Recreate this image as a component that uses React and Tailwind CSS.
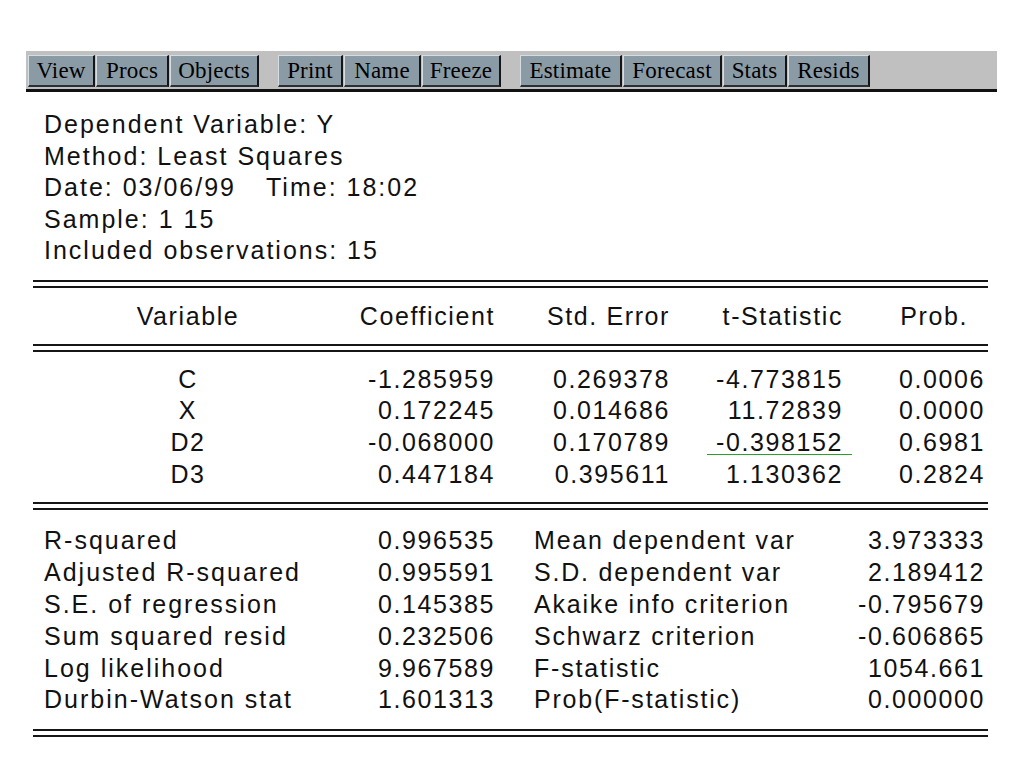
import React from "react";

const groups = [
  [
    ["View", "w-[67px]"],
    ["Procs", "w-[73px]"],
    ["Objects", "w-[89px]"],
  ],
  [
    ["Print", "w-[65px]"],
    ["Name", "w-[77px]"],
    ["Freeze", "w-[79px]"],
  ],
  [
    ["Estimate", "w-[102px]"],
    ["Forecast", "w-[99px]"],
    ["Stats", "w-[64px]"],
    ["Resids", "w-[82px]"],
  ],
];

const coefs = [
  ["C", "-1.285959", "0.269378", "-4.773815", "0.0006"],
  ["X", "0.172245", "0.014686", "11.72839", "0.0000"],
  ["D2", "-0.068000", "0.170789", "-0.398152", "0.6981"],
  ["D3", "0.447184", "0.395611", "1.130362", "0.2824"],
];

const stats = [
  ["R-squared", "0.996535", "Mean dependent var", "3.973333"],
  ["Adjusted R-squared", "0.995591", "S.D. dependent var", "2.189412"],
  ["S.E. of regression", "0.145385", "Akaike info criterion", "-0.795679"],
  ["Sum squared resid", "0.232506", "Schwarz criterion", "-0.606865"],
  ["Log likelihood", "9.967589", "F-statistic", "1054.661"],
  ["Durbin-Watson stat", "1.601313", "Prob(F-statistic)", "0.000000"],
];

const DoubleRule = () => (
  <div className="h-[8px] border-t-2 border-b-2 border-[#161616]" />
);

const ToolButton = ({ label, width }) => (
  <div
    className={`${width} h-[32px] flex items-center justify-center bg-[#8b9ba5] border-l border-t border-[#d5dde2] border-r-2 border-b-2 border-r-[#151515] border-b-[#2a2f33] text-[23px] tracking-[0.2px] text-black`}
    style={{ fontFamily: '"Liberation Serif", serif' }}
  >
    {label}
  </div>
);

export default function App() {
  return (
    <div
      className="w-[1024px] min-h-[768px] bg-white pt-[51px] text-[#111] text-[25px] leading-[31.6px] tracking-[1.6px]"
      style={{ fontFamily: '"Liberation Sans", Arial, sans-serif' }}
    >
      <div className="ml-[26px] w-[971px] h-[41px] bg-[#c0c0c0] border-b-[3px] border-[#111] pl-[2px] pt-[4px] flex gap-[19px]">
        {groups.map((g, i) => (
          <div key={i} className="flex gap-[1px]">
            {g.map(([label, w]) => (
              <ToolButton key={label} label={label} width={w} />
            ))}
          </div>
        ))}
      </div>

      <div className="ml-[44px] mt-[17px] tracking-[2px]">
        <div>Dependent Variable: Y</div>
        <div>Method: Least Squares</div>
        <div>
          Date: 03/06/99<span className="ml-[30px]">Time: 18:02</span>
        </div>
        <div>Sample: 1 15</div>
        <div>Included observations: 15</div>
      </div>

      <div className="ml-[33px] w-[955px] mt-[13px]">
        <DoubleRule />
        <div className="grid grid-cols-[310px_152px_175px_173px_142px] pt-[13px] pb-[11px]">
          <div className="text-center">Variable</div>
          <div className="text-right">Coefficient</div>
          <div className="text-right">Std. Error</div>
          <div className="text-right">t-Statistic</div>
          <div className="text-right pr-[17px]">Prob.</div>
        </div>
        <DoubleRule />
        <div className="pt-[12px] pb-[12px]">
          {coefs.map((r) => (
            <div
              key={r[0]}
              className="grid grid-cols-[310px_152px_175px_173px_142px] h-[31.7px]"
            >
              <div className="text-center">{r[0]}</div>
              <div className="text-right">{r[1]}</div>
              <div className="text-right">{r[2]}</div>
              <div className="text-right relative">
                {r[3]}
                {r[0] === "D2" && (
                  <span className="absolute left-[37px] top-[27px] w-[145px] h-[1px] bg-[#2aa02a]" />
                )}
              </div>
              <div className="text-right">{r[4]}</div>
            </div>
          ))}
        </div>
        <DoubleRule />
        <div className="pt-[15px] pb-[13px]">
          {stats.map((r) => (
            <div
              key={r[0]}
              className="grid grid-cols-[310px_152px_348px_142px] h-[31.8px]"
            >
              <div className="pl-[11px] tracking-[2px]">{r[0]}</div>
              <div className="text-right">{r[1]}</div>
              <div className="pl-[39px] tracking-[1.8px]">{r[2]}</div>
              <div className="text-right">{r[3]}</div>
            </div>
          ))}
        </div>
        <DoubleRule />
      </div>
    </div>
  );
}
